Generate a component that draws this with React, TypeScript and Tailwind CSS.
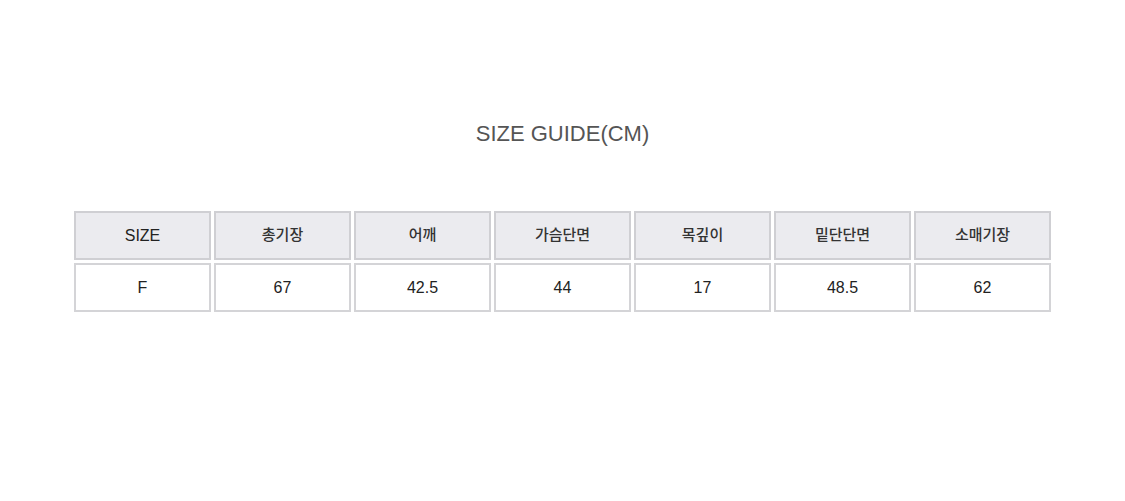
import React from "react";

const headers = ["SIZE", "총기장", "어깨", "가슴단면", "목깊이", "밑단단면", "소매기장"];
const values = ["F", "67", "42.5", "44", "17", "48.5", "62"];

const isKo = (s: string) => /[\uac00-\ud7a3]/.test(s);

export default function App() {
  return (
    <div
      className="w-[1125px] h-[501px] bg-white flex flex-col items-center"
      style={{ fontFamily: '"Liberation Sans", "Noto Sans CJK KR", sans-serif' }}
    >
      <div className="mt-[118px] h-[30px] flex items-center text-[22px] text-[#555555]">
        SIZE GUIDE(CM)
      </div>
      <table className="mt-[60px] border-separate border-spacing-[3px] -mx-[3px] w-[983px] table-fixed">
        <tbody>
          <tr>
            {headers.map((h) => (
              <td
                key={h}
                className={
                  isKo(h)
                    ? "h-[49px] border-2 border-[#cfcfd3] bg-[#ebebef] text-center text-[15px] font-medium text-[#333333]"
                    : "h-[49px] border-2 border-[#cfcfd3] bg-[#ebebef] text-center text-[16px] text-[#222222]"
                }
              >
                {h}
              </td>
            ))}
          </tr>
          <tr>
            {values.map((v, i) => (
              <td
                key={i}
                className="h-[49px] border-2 border-[#d4d4d7] bg-white text-center text-[16px] text-[#222222]"
              >
                {v}
              </td>
            ))}
          </tr>
        </tbody>
      </table>
    </div>
  );
}
